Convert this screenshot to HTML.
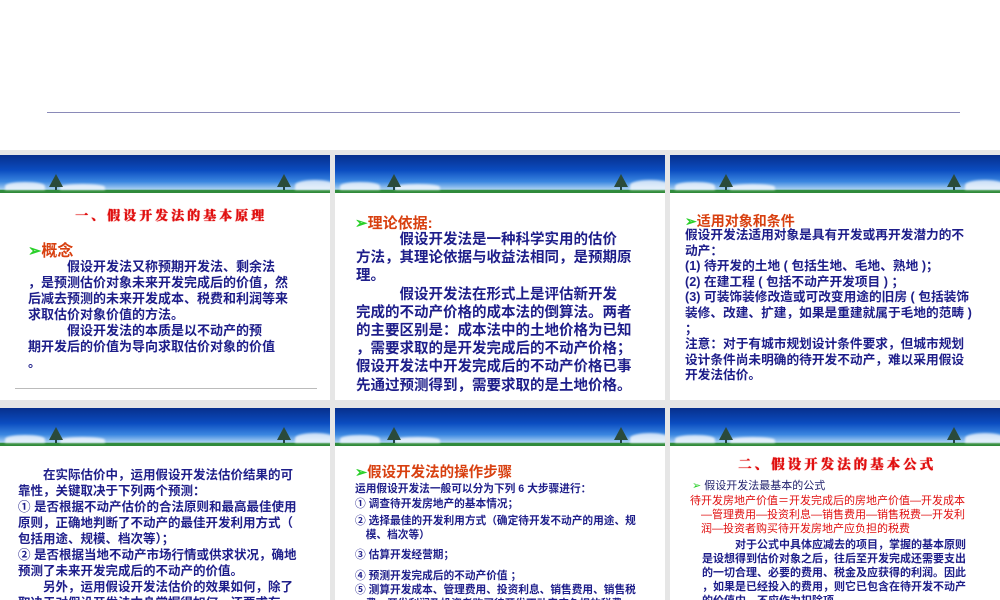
<!DOCTYPE html>
<html><head><meta charset="utf-8"><style>
*{margin:0;padding:0;box-sizing:border-box}
body{width:1000px;height:600px;overflow:hidden;background:#fff;position:relative;font-family:"Liberation Sans","Noto Sans CJK SC",sans-serif}
.bg{position:absolute;left:0;top:150px;width:1000px;height:450px;background:#e6e6e6}
.hl{position:absolute;left:47px;top:112px;width:913px;height:1px;background:#8a8ab8}
.p{position:absolute;background:#fff;overflow:hidden}
.b{position:absolute;left:0;top:0;width:100%;height:38px;background:linear-gradient(180deg,#072f8c 0%,#0b4cc0 40%,#3a86e0 70%,#a8cff2 90%,#2f8a3a 93%,#2f8a3a 100%);overflow:hidden}
.c{position:absolute;bottom:3px;background:#fff;border-radius:50% 50% 0 0;opacity:.75;filter:blur(1px)}
.t{position:absolute;bottom:3px;width:2px;height:14px;background:#244}
.t:before{content:"";position:absolute;left:-6px;top:-2px;border-left:7px solid transparent;border-right:7px solid transparent;border-bottom:13px solid #2a4a3a}
.x{position:absolute;white-space:nowrap;color:#1e1e8a;font-weight:bold}
.r{color:#e01010}
.h{font-weight:bold;text-shadow:0 0 1px #e01010,0.5px 0 0 #e01010}
.o{color:#d84010;font-weight:bold}
.g{color:#2ad02a}
</style></head><body>
<div class="hl"></div>
<div class="bg"></div>

<div class="p" style="left:0;top:155px;width:330px;height:245px">
 <div class="b"><div class="c" style="left:5px;width:40px;height:8px"></div><div class="c" style="left:60px;width:45px;height:6px"></div><div class="c" style="left:295px;width:40px;height:10px"></div><div class="t" style="left:55px"></div><div class="t" style="left:283px"></div></div>
 <div class="x r h" style="left:75px;top:50px;font-size:13px;letter-spacing:3px;font-family:'Noto Serif CJK SC',serif">一、假设开发法的基本原理</div>
 <div class="x o" style="left:28px;top:82px;font-size:16px"><span class="g">➢</span>概念</div>
 <div class="x" style="left:28px;top:104px;font-size:13px;line-height:16px">　　　假设开发法又称预期开发法、剩余法<br>，是预测估价对象未来开发完成后的价值，然<br>后减去预测的未来开发成本、税费和利润等来<br>求取估价对象价值的方法。<br>　　　假设开发法的本质是以不动产的预<br>期开发后的价值为导向求取估价对象的价值<br>。</div>
 <div style="position:absolute;left:15px;top:233px;width:302px;height:1px;background:#bbb"></div>
</div>

<div class="p" style="left:335px;top:155px;width:330px;height:245px">
 <div class="b"><div class="c" style="left:5px;width:40px;height:8px"></div><div class="c" style="left:60px;width:45px;height:6px"></div><div class="c" style="left:295px;width:40px;height:10px"></div><div class="t" style="left:58px"></div><div class="t" style="left:285px"></div></div>
 <div class="x o" style="left:20px;top:57px;font-size:15px"><span class="g">➢</span>理论依据:</div>
 <div class="x" style="left:21px;top:76px;font-size:14.5px;line-height:18.2px">　　　假设开发法是一种科学实用的估价<br>方法，其理论依据与收益法相同，是预期原<br>理。<br>　　　假设开发法在形式上是评估新开发<br>完成的不动产价格的成本法的倒算法。两者<br>的主要区别是：成本法中的土地价格为已知<br>，需要求取的是开发完成后的不动产价格；<br>假设开发法中开发完成后的不动产价格已事<br>先通过预测得到，需要求取的是土地价格。</div>
</div>

<div class="p" style="left:670px;top:155px;width:330px;height:245px">
 <div class="b"><div class="c" style="left:5px;width:40px;height:8px"></div><div class="c" style="left:60px;width:45px;height:6px"></div><div class="c" style="left:295px;width:40px;height:10px"></div><div class="t" style="left:55px"></div><div class="t" style="left:283px"></div></div>
 <div class="x o" style="left:15px;top:56px;font-size:14px"><span class="g">➢</span>适用对象和条件</div>
 <div class="x" style="left:15px;top:73px;font-size:12.7px;line-height:15.6px">假设开发法适用对象是具有开发或再开发潜力的不<br>动产：<br>(1) 待开发的土地 ( 包括生地、毛地、熟地 )；<br>(2) 在建工程 ( 包括不动产开发项目 ) ；<br>(3) 可装饰装修改造或可改变用途的旧房 ( 包括装饰<br>装修、改建、扩建，如果是重建就属于毛地的范畴 )<br>；<br>注意：对于有城市规划设计条件要求，但城市规划<br>设计条件尚未明确的待开发不动产，难以采用假设<br>开发法估价。</div>
</div>

<div class="p" style="left:0;top:408px;width:330px;height:192px">
 <div class="b"><div class="c" style="left:5px;width:40px;height:8px"></div><div class="c" style="left:60px;width:45px;height:6px"></div><div class="c" style="left:295px;width:40px;height:10px"></div><div class="t" style="left:55px"></div><div class="t" style="left:283px"></div></div>
 <div class="x" style="left:18px;top:59px;font-size:12.5px;line-height:16px">　　在实际估价中，运用假设开发法估价结果的可<br>靠性，关键取决于下列两个预测：<br>① 是否根据不动产估价的合法原则和最高最佳使用<br>原则，正确地判断了不动产的最佳开发利用方式（<br>包括用途、规模、档次等）；<br>② 是否根据当地不动产市场行情或供求状况，确地<br>预测了未来开发完成后的不动产的价值。<br>　　另外，运用假设开发法估价的效果如何，除了<br>取决于对假设开发法本身掌握得如何，还要求有一</div>
</div>

<div class="p" style="left:335px;top:408px;width:330px;height:192px">
 <div class="b"><div class="c" style="left:5px;width:40px;height:8px"></div><div class="c" style="left:60px;width:45px;height:6px"></div><div class="c" style="left:295px;width:40px;height:10px"></div><div class="t" style="left:58px"></div><div class="t" style="left:285px"></div></div>
 <div class="x o" style="left:20px;top:53px;font-size:14.5px"><span class="g">➢</span>假设开发法的操作步骤</div>
 <div class="x" style="left:20px;top:74px;font-size:10.7px;line-height:14.5px">运用假设开发法一般可以分为下列 6 大步骤进行：<br>① 调查待开发房地产的基本情况；</div>
 <div class="x" style="left:20px;top:106px;font-size:10.7px;line-height:14px">② 选择最佳的开发利用方式（确定待开发不动产的用途、规<br>　模、档次等）</div>
 <div class="x" style="left:20px;top:139px;font-size:10.7px">③ 估算开发经营期；</div>
 <div class="x" style="left:20px;top:161px;font-size:10.7px;line-height:14px">④ 预测开发完成后的不动产价值 ；<br>⑤ 测算开发成本、管理费用、投资利息、销售费用、销售税<br>　费、开发利润及投资者购买待开发不动产应负担的税费；</div>
</div>

<div class="p" style="left:670px;top:408px;width:330px;height:192px">
 <div class="b"><div class="c" style="left:5px;width:40px;height:8px"></div><div class="c" style="left:60px;width:45px;height:6px"></div><div class="c" style="left:295px;width:40px;height:10px"></div><div class="t" style="left:55px"></div><div class="t" style="left:283px"></div></div>
 <div class="x r h" style="left:68px;top:45px;font-size:13.5px;letter-spacing:3px;font-family:'Noto Serif CJK SC',serif">二、假设开发法的基本公式</div>
 <div class="x" style="left:22px;top:69px;font-size:11px;font-weight:normal;color:#1e1e6a"><span class="g">➢</span> 假设开发法最基本的公式</div>
 <div class="x r" style="left:20px;top:86px;font-size:11px;line-height:14px;font-weight:normal">待开发房地产价值＝开发完成后的房地产价值—开发成本<br>　—管理费用—投资利息—销售费用—销售税费—开发利<br>　润—投资者购买待开发房地产应负担的税费</div>
 <div class="x" style="left:32px;top:130px;font-size:11px;line-height:14px">　　　对于公式中具体应减去的项目，掌握的基本原则<br>是设想得到估价对象之后，往后至开发完成还需要支出<br>的一切合理、必要的费用、税金及应获得的利润。因此<br>，如果是已经投入的费用，则它已包含在待开发不动产<br>的价值内，不应作为扣除项。</div>
</div>
</body></html>
